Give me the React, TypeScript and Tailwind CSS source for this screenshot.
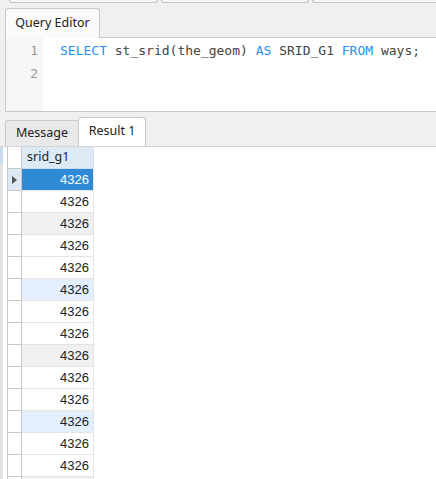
import { ReactNode } from "react";

const KW = "text-[#2b8ff0]";

const rowBg = (i: number) => {
  if (i === 0) return "bg-[#2f8ad6] text-white";
  if (i % 6 === 2) return "bg-[#f0f0f0] text-[#222]";
  if (i % 6 === 5) return "bg-[#e3effc] text-[#222]";
  return "bg-white text-[#222]";
};

function Code({ children }: { children: ReactNode }) {
  return <span className="whitespace-pre">{children}</span>;
}

export default function App() {
  const rows = Array.from({ length: 15 }, (_, i) => i);

  return (
    <div className="w-[436px] h-[479px] overflow-hidden bg-[#f0f0f0] flex flex-col font-['Noto_Sans',sans-serif]">
      {/* stub of the window tabs above */}
      <div className="shrink-0 flex h-[3px] gap-[3px] pl-[9px]">
        <div className="w-[149px] border-x border-b border-[#c4c4c4] rounded-b-[3px] bg-[#f6f6f6]" />
        <div className="w-[148px] border-x border-b border-[#c4c4c4] rounded-b-[3px] bg-[#f6f6f6]" />
        <div className="flex-1 border-l border-b border-[#c4c4c4] rounded-bl-[3px] bg-[#f6f6f6]" />
      </div>

      {/* Query Editor */}
      <div className="shrink-0 mt-[4px] pl-[5px] flex">
        <div className="w-[95px] h-[30px] flex items-center justify-center bg-[#fafafa] border-x border-t border-[#c8c8c8] rounded-t-[3px] text-[12.5px] text-[#222] relative top-px">
          Query Editor
        </div>
      </div>
      <div className="shrink-0 ml-[5px] h-[75px] flex border-l border-t border-b border-[#c8c8c8] bg-white">
        <div className="w-[37px] bg-[#f7f7f7] flex flex-col items-end pr-[5px] pt-[1px] font-['DejaVu_Sans_Mono',monospace] text-[13px] leading-[23px] text-[#999]">
          <span>1</span>
          <span>2</span>
        </div>
        <div className="pl-[17px] pt-[1px] font-['DejaVu_Sans_Mono',monospace] text-[13px] leading-[23px] text-[#444]">
          <Code>
            <span className={KW}>SELECT</span> st_srid(the_geom) <span className={KW}>AS</span> SRID_G1{" "}
            <span className={KW}>FROM</span> ways;
          </Code>
        </div>
      </div>

      {/* result tabs */}
      <div className="shrink-0 mt-[5px] pl-[5px] flex items-end h-[29px]">
        <div className="w-[73px] h-[26px] flex items-center justify-center bg-[#e9e9e9] border-l border-t border-[#c8c8c8] rounded-tl-[3px] text-[12.5px] text-[#222]">
          Message
        </div>
        <div className="w-[68px] h-[29px] flex items-center justify-center bg-white border-x border-t border-[#c8c8c8] rounded-t-[3px] text-[12.5px] text-[#222] pb-[2px]">
          Result 1
        </div>
      </div>

      {/* grid */}
      <div className="flex-1 min-h-0 overflow-hidden bg-white flex border-t border-[#d4d4d4]">
        <div className="w-[3px] shrink-0 bg-[#e2e2e2] relative">
          <div className="absolute left-0 top-0 w-[3px] h-[16px] bg-[#c9d9ea]" />
        </div>
        <div className="pl-[4px] flex flex-col">
          <div className="shrink-0 flex h-[22px]">
            <div className="w-[15px] border-l border-r border-b border-[#c8c8c8] bg-white" />
            <div className="w-[72px] bg-[#dde9f5] border-r border-b border-[#cfdbe8] flex items-center pl-[5px] text-[12.5px] text-[#222]">
              srid_g1
            </div>
          </div>
          {rows.map((i) => (
            <div key={i} className="shrink-0 flex h-[22px]">
              <div
                className={`w-[15px] border-l border-r border-b border-[#c8c8c8] flex items-center justify-center ${
                  i === 0 ? "bg-[#dde9f5]" : "bg-white"
                }`}
              >
                {i === 0 && (
                  <svg width="5" height="8" viewBox="0 0 5 8">
                    <path d="M0 0 L5 4 L0 8 Z" fill="#555" />
                  </svg>
                )}
              </div>
              <div
                className={`w-[72px] border-r border-b border-[#e4e4e4] flex items-center justify-end pr-[4px] font-['Liberation_Sans',Arial,sans-serif] text-[13px] ${rowBg(i)}`}
              >
                {i < 14 ? "4326" : ""}
              </div>
            </div>
          ))}
        </div>
      </div>
    </div>
  );
}
